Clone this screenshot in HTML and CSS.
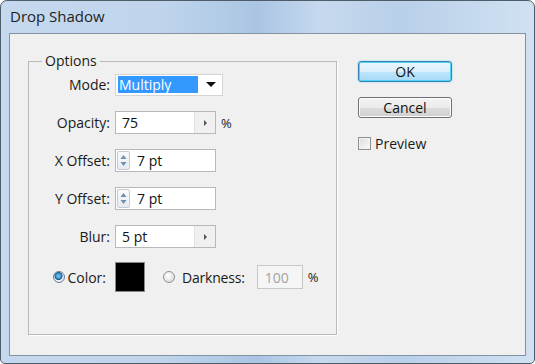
FILE: index.html
```html
<!DOCTYPE html>
<html lang="en">
<head>
  <meta charset="UTF-8" />
  <title>Drop Shadow</title>
  <link rel="stylesheet" href="styles.css">
</head>
<body>
  <div class="window">
    <div class="titlebar">Drop Shadow</div>

    <div class="client">
      <fieldset class="options">
        <legend>Options</legend>

        <div class="row">
          <label class="lbl">Mode:</label>
          <div class="select">
            <span class="sel-text">Multiply</span>
            <span class="caret"></span>
          </div>
        </div>

        <div class="row">
          <label class="lbl">Opacity:</label>
          <div class="field stepper">
            <span class="val">75</span>
            <span class="step-btn"><span class="tri-right"></span></span>
          </div>
          <span class="unit">%</span>
        </div>

        <div class="row">
          <label class="lbl">X Offset:</label>
          <div class="field spin">
            <span class="spin-btn">
              <svg width="11" height="17" viewBox="0 0 11 17">
                <path d="M5.5 3 L8.5 7 L2.5 7 Z" fill="#6d8fb5"/>
                <path d="M5.5 14 L8.5 10 L2.5 10 Z" fill="#6d8fb5"/>
              </svg>
            </span>
            <span class="val">7 pt</span>
          </div>
        </div>

        <div class="row">
          <label class="lbl">Y Offset:</label>
          <div class="field spin">
            <span class="spin-btn">
              <svg width="11" height="17" viewBox="0 0 11 17">
                <path d="M5.5 3 L8.5 7 L2.5 7 Z" fill="#6d8fb5"/>
                <path d="M5.5 14 L8.5 10 L2.5 10 Z" fill="#6d8fb5"/>
              </svg>
            </span>
            <span class="val">7 pt</span>
          </div>
        </div>

        <div class="row">
          <label class="lbl">Blur:</label>
          <div class="field stepper">
            <span class="val">5 pt</span>
            <span class="step-btn"><span class="tri-right"></span></span>
          </div>
        </div>

        <div class="row color-row">
          <label class="lbl radio-lbl"><span class="radio on"></span>Color:</label>
          <span class="swatch"></span>
          <label class="radio-lbl darkness"><span class="radio"></span>Darkness:</label>
          <div class="field disabled"><span class="val">100</span></div>
          <span class="unit">%</span>
        </div>
      </fieldset>

      <div class="actions">
        <button class="btn default">OK</button>
        <button class="btn">Cancel</button>
        <label class="check"><span class="box"></span>Preview</label>
      </div>
    </div>
  </div>
</body>
</html>
```

FILE: styles.css
```css
html, body {
  margin: 0;
  padding: 0;
}

body {
  width: 535px;
  height: 364px;
  background: #ffffff;
  font-family: "Open Sans", "Noto Sans", sans-serif;
  font-size: 14px;
  color: #1a1a1a;
}

.window {
  box-sizing: border-box;
  width: 535px;
  height: 364px;
  display: flex;
  flex-direction: column;
  padding: 0 8px 7px 8px;
  border: 1px solid #4f5d6b;
  border-radius: 7px 7px 5px 5px;
  background: linear-gradient(90deg, #c4d8ee 0%, #c0d5ec 30%, #aac5e3 48%, #c6d9ee 60%, #b9d0e9 75%, #d0e1f2 100%);
}

.titlebar {
  height: 32px;
  line-height: 30px;
  padding-left: 1px;
  font-size: 15px;
  color: #1e1e1e;
}

.client {
  flex: 1;
  display: flex;
  align-items: flex-start;
  padding-left: 18px;
  border: 1px solid #8593a1;
  background: #f0f0f0;
}

/* group box */
.options {
  box-sizing: border-box;
  width: 309px;
  height: 282px;
  margin: 19px 0 0 0;
  padding: 4px 0 0 0;
  border: 1px solid #b9b9b9;
  box-shadow: 1px 1px 0 #ffffff;
  min-inline-size: 0;
}

.options legend {
  margin-left: 13px;
  padding: 0 3px;
  line-height: 16px;
}

.row {
  display: flex;
  align-items: center;
  height: 23px;
  margin-bottom: 15px;
}

.lbl {
  width: 81px;
  margin-right: 5px;
  text-align: right;
}

.select {
  box-sizing: border-box;
  width: 108px;
  height: 22px;
  display: flex;
  align-items: center;
  padding: 0 6px 0 2px;
  border: 1px solid #d4d4d4;
  background: #ffffff;
}

.sel-text {
  width: 79px;
  height: 17px;
  line-height: 17px;
  padding-left: 1px;
  background: #3399ff;
  color: #ffffff;
}

.caret {
  margin-left: auto;
  width: 0;
  height: 0;
  border-left: 5px solid transparent;
  border-right: 5px solid transparent;
  border-top: 5px solid #111111;
}

.field {
  box-sizing: border-box;
  width: 101px;
  height: 23px;
  display: flex;
  align-items: center;
  border: 1px solid #b8b8b8;
  background: #ffffff;
}

.val {
  padding-left: 6px;
  color: #111111;
}

.step-btn {
  margin-left: auto;
  width: 20px;
  height: 100%;
  display: flex;
  align-items: center;
  justify-content: center;
  background: #f0f0f0;
  border-left: 1px solid #e2e2e2;
}

.tri-right {
  width: 0;
  height: 0;
  border-top: 3px solid transparent;
  border-bottom: 3px solid transparent;
  border-left: 3px solid #555555;
}

.spin-btn {
  box-sizing: border-box;
  width: 13px;
  height: 19px;
  margin-left: 1px;
  display: flex;
  align-items: center;
  justify-content: center;
  border: 1px solid #c2cbd6;
  border-radius: 2px;
  background: linear-gradient(#fbfbfb, #e6eaef);
}

.spin .val {
  padding-left: 7px;
}

.unit {
  margin-left: 5px;
  font-size: 13px;
}

/* colour row */
.color-row {
  height: 30px;
  margin-top: -1px;
}

.radio-lbl {
  display: flex;
  align-items: center;
}

.color-row .lbl {
  justify-content: flex-end;
  box-sizing: border-box;
  padding-right: 4px;
}

.radio {
  box-sizing: border-box;
  width: 12px;
  height: 12px;
  margin-right: 2px;
  border: 1px solid #8e9296;
  border-radius: 50%;
  background: radial-gradient(circle at 40% 35%, #ffffff 0, #e4e4e4 60%, #cfcfcf 100%);
}

.radio.on {
  border-color: #6f8091;
  background: radial-gradient(circle at 45% 40%, #8fd0f4 0, #2a87c8 35%, #1d5a93 45%, #eef2f6 55%, #d6dde4 100%);
}

.swatch {
  box-sizing: border-box;
  width: 30px;
  height: 30px;
  border: 1px solid #8a8a8a;
  background: #000000;
}

.darkness {
  margin-left: 18px;
  letter-spacing: -0.2px;
}

.darkness .radio {
  margin-right: 7px;
}

.field.disabled {
  width: 46px;
  height: 24px;
  margin-left: 12px;
  border-color: #c8c8c8;
  background: #f5f5f5;
}

.field.disabled .val {
  padding-left: 7px;
  color: #a3a3a3;
}

/* buttons */
.actions {
  display: flex;
  flex-direction: column;
  align-items: flex-start;
  margin: 27px 0 0 21px;
}

.btn {
  box-sizing: border-box;
  width: 94px;
  height: 21px;
  padding: 0;
  margin-bottom: 15px;
  font-family: inherit;
  font-size: 14px;
  line-height: 18px;
  color: #111111;
  border: 1px solid #707070;
  border-radius: 3px;
  background: linear-gradient(#f4f4f4 0%, #ebebeb 50%, #dddddd 51%, #cfcfcf 100%);
  box-shadow: inset 0 0 0 1px #fcfcfc;
}

.btn.default {
  border-color: #3c7fb1;
  background: linear-gradient(#eaf6fd 0%, #d9f0fc 50%, #bee6fd 51%, #a7d9f5 100%);
  box-shadow: inset 0 0 0 1px #4fd3f5, 0 0 2px #6fd5f7;
}

.check {
  display: flex;
  align-items: center;
  margin-top: 1px;
}

.box {
  box-sizing: border-box;
  width: 13px;
  height: 13px;
  margin-right: 4px;
  border: 1px solid #8e8f8f;
  background: linear-gradient(135deg, #dcdcdc, #fbfbfb);
  box-shadow: inset 0 0 0 1px #f4f4f4;
}
```
